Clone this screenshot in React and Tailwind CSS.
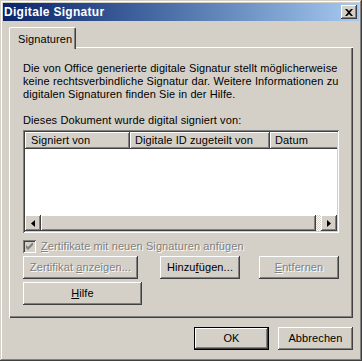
import React from "react";

const raised =
  "shadow-[inset_-1px_-1px_0_#404040,inset_1px_1px_0_#ffffff,inset_-2px_-2px_0_#808080,inset_2px_2px_0_#d4d0c8]";
const sunken =
  "shadow-[inset_1px_1px_0_#808080,inset_-1px_-1px_0_#ffffff,inset_2px_2px_0_#404040,inset_-2px_-2px_0_#d4d0c8]";
const headerCell =
  "shadow-[inset_-1px_-1px_0_#404040,inset_1px_1px_0_#ffffff,inset_-2px_-2px_0_#808080]";

const disabledText = "text-[#808080] [text-shadow:1px_1px_0_#ffffff]";

function Button({ children, className = "", disabled, isDefault }) {
  if (isDefault) {
    return (
      <div className={`h-[23px] border border-black ${className}`}>
        <div className={`h-full flex items-center justify-center ${raised}`}>
          {children}
        </div>
      </div>
    );
  }
  return (
    <div
      className={`h-[23px] flex items-center justify-center ${raised} ${
        disabled ? disabledText : "text-black"
      } ${className}`}
    >
      {children}
    </div>
  );
}

function Arrow({ dir }) {
  return (
    <div className={`w-[16px] h-[16px] shrink-0 bg-[#d4d0c8] flex items-center justify-center ${raised}`}>
      <svg width="4" height="7" viewBox="0 0 4 7">
        {dir === "left" ? (
          <path d="M4 0 L0 3.5 L4 7 Z" fill="#000" />
        ) : (
          <path d="M0 0 L4 3.5 L0 7 Z" fill="#000" />
        )}
      </svg>
    </div>
  );
}

function U({ children }) {
  return <span className="underline underline-offset-[1px]">{children}</span>;
}

export default function App() {
  return (
    <div
      className="w-[362px] h-[361px] bg-[#d4d0c8] p-[3px] flex flex-col text-[11px] leading-[13px] tracking-[0.1px] text-black shadow-[inset_-1px_-1px_0_#404040,inset_1px_1px_0_#d4d0c8,inset_-2px_-2px_0_#808080,inset_2px_2px_0_#ffffff]"
      style={{ fontFamily: '"Liberation Sans", Arial, sans-serif' }}
    >
      {/* title bar */}
      <div className="h-[18px] flex items-center justify-between bg-linear-to-r from-[#0a246a] to-[#a6caf0] pl-[1px] pr-[2px]">
        <span className="text-white font-bold text-[12px] tracking-[0.3px]">Digitale Signatur</span>
        <div className={`w-[16px] h-[14px] bg-[#d4d0c8] flex items-center justify-center ${raised}`}>
          <svg width="8" height="7" viewBox="0 0 8 7">
            <path d="M0 0h2l2 2 2-2h2v0L5 3.5 8 7H6L4 5 2 7H0l3-3.5z" fill="#000" />
          </svg>
        </div>
      </div>

      <div className="flex-1 flex flex-col px-[6px] pt-[6px]">
        {/* tabs */}
        <div className="flex h-[21px] relative z-10 -mb-[1px]">
          <div className="w-[67px] h-[22px] bg-[#d4d0c8] border-t border-l border-white border-r border-r-[#404040] rounded-tl-[2px] rounded-tr-[2px] shadow-[inset_-1px_0_0_#808080] pl-[8px] pt-[5px]">
            Signaturen
          </div>
        </div>

        {/* panel */}
        <div className="h-[271px] shadow-[inset_1px_1px_0_#ffffff,inset_-1px_-1px_0_#404040,inset_-2px_-2px_0_#808080] pl-[14px] pr-[14px] pt-[15px] flex flex-col">
          <p>
            Die von Office generierte digitale Signatur stellt möglicherweise
            keine rechtsverbindliche Signatur dar. Weitere Informationen zu
            digitalen Signaturen finden Sie in der Hilfe.
          </p>
          <p className="mt-[13px]">Dieses Dokument wurde digital signiert von:</p>

          {/* list */}
          <div className={`mt-[3px] h-[103px] bg-white p-[2px] flex flex-col ${sunken}`}>
            <div className="h-[17px] flex overflow-hidden bg-[#d4d0c8] shrink-0">
              <div className={`w-[105px] shrink-0 pl-[6px] flex items-center ${headerCell}`}>Signiert von</div>
              <div className={`w-[140px] shrink-0 pl-[5px] flex items-center ${headerCell}`}>Digitale ID zugeteilt von</div>
              <div className={`w-[100px] shrink-0 pl-[5px] flex items-center ${headerCell}`}>Datum</div>
            </div>
            <div className="flex-1" />
            <div className="h-[16px] flex shrink-0">
              <Arrow dir="left" />
              <div className={`w-[275px] shrink-0 bg-[#d4d0c8] ${raised}`} />
              <div className="flex-1 bg-[repeating-conic-gradient(#d4d0c8_0%_25%,#ffffff_0%_50%)] bg-[length:2px_2px]" />
              <Arrow dir="right" />
            </div>
          </div>

          {/* checkbox */}
          <div className="mt-[6px] flex items-center h-[14px]">
            <div className={`w-[13px] h-[13px] bg-[#d4d0c8] flex items-center justify-center ${sunken}`}>
              <svg width="7" height="7" viewBox="0 0 7 7">
                <path d="M0 2v3l2 2 5-5V-1L2 4z" fill="#808080" />
              </svg>
            </div>
            <span className={`ml-[5px] ${disabledText}`}>
              <U>Z</U>ertifikate mit neuen Signaturen anfügen
            </span>
          </div>

          {/* buttons */}
          <div className="mt-[3px] flex">
            <Button disabled className="w-[115px]">
              <span>
                Zertifikat <U>a</U>nzeigen...
              </span>
            </Button>
            <Button className="w-[80px] ml-[22px]">
              <span>
                Hinzu<U>f</U>ügen...
              </span>
            </Button>
            <Button disabled className="w-[80px] ml-[19px]">
              <span>
                <U>E</U>ntfernen
              </span>
            </Button>
          </div>
          <div className="mt-[3px] flex">
            <Button className="w-[119px]">
              <span>
                <U>H</U>ilfe
              </span>
            </Button>
          </div>
        </div>

        {/* dialog buttons */}
        <div className="mt-[9px] flex justify-end gap-[9px]">
          <Button isDefault className="w-[75px]">
            OK
          </Button>
          <Button className="w-[75px]">Abbrechen</Button>
        </div>
      </div>
    </div>
  );
}
